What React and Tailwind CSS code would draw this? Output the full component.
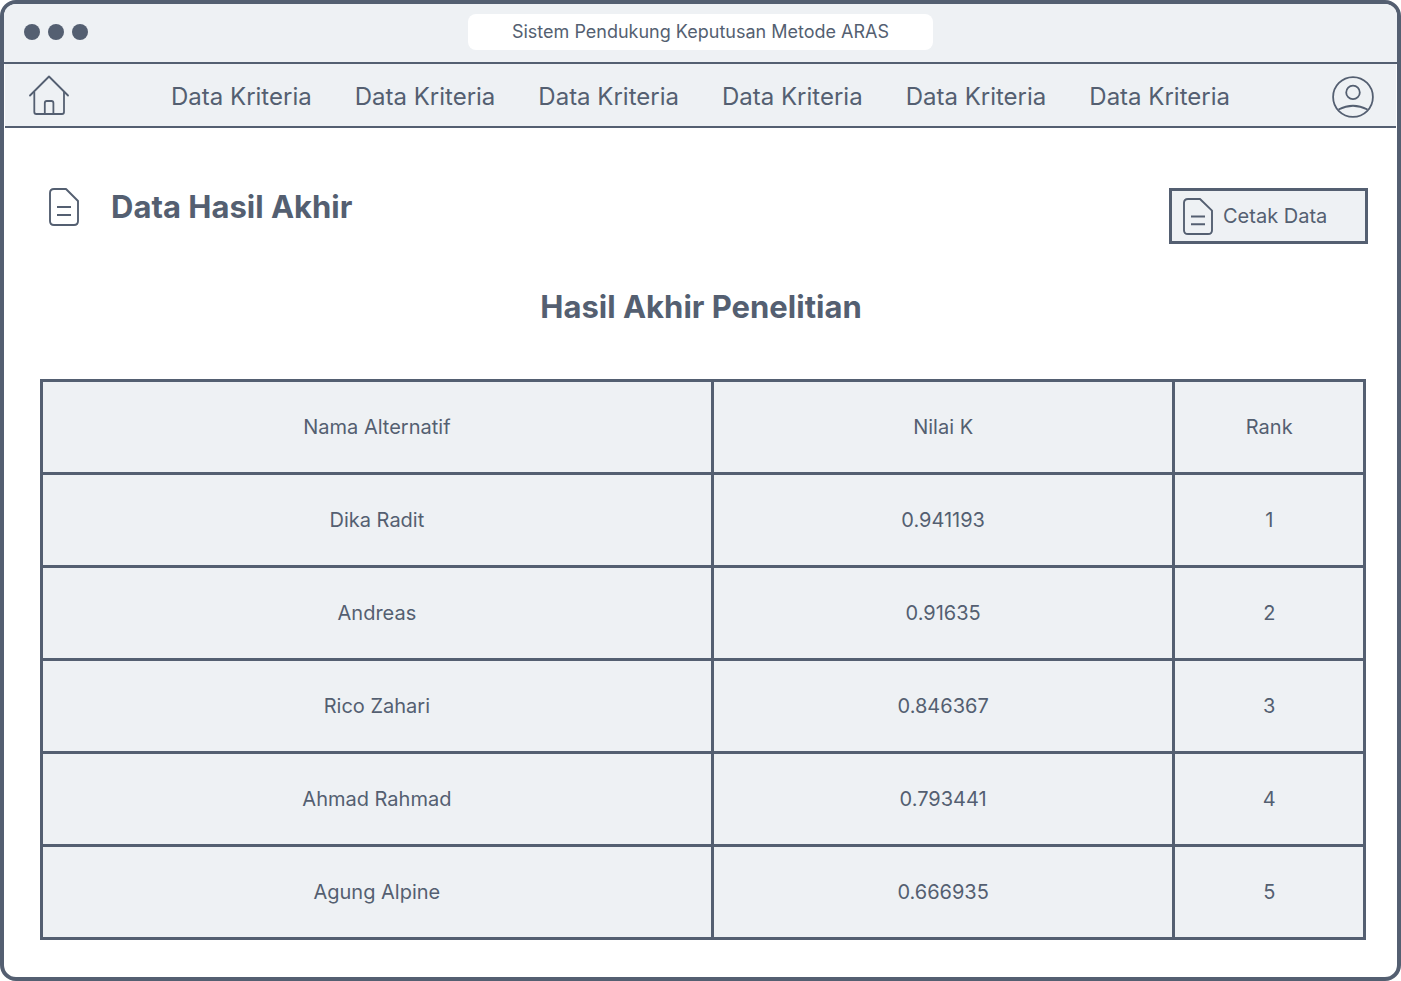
const navItems = [1, 2, 3, 4, 5, 6];

const results = [
  { name: "Dika Radit", value: "0.941193", rank: 1 },
  { name: "Andreas", value: "0.91635", rank: 2 },
  { name: "Rico Zahari", value: "0.846367", rank: 3 },
  { name: "Ahmad Rahmad", value: "0.793441", rank: 4 },
  { name: "Agung Alpine", value: "0.666935", rank: 5 },
];

function HomeIcon() {
  return (
    <svg width="40" height="44" viewBox="0 0 40 44" fill="none" stroke="currentColor" strokeWidth="1.8" aria-hidden="true">
      <path d="M1 20.5 L20 1.5 L39 20.5" strokeLinecap="round" strokeLinejoin="round" />
      <path d="M5.3 17 V37 Q5.3 39 7.3 39 H33 Q35 39 35 37 V17" />
      <path d="M15.8 39 V28 Q15.8 26 17.8 26 H22.4 Q24.4 26 24.4 28 V39" />
    </svg>
  );
}

function ProfileIcon() {
  return (
    <svg width="42" height="42" viewBox="0 0 42 42" fill="none" stroke="currentColor" strokeWidth="1.8" aria-hidden="true">
      <circle cx="21" cy="21" r="19.9" />
      <circle cx="21" cy="16.4" r="6.8" />
      <path d="M6.500 33.500 Q21 26 35.500 33.500" />
    </svg>
  );
}

function DocumentIcon({ width = 30, height = 38 }) {
  return (
    <svg className="shrink-0" width={width} height={height} viewBox="0 0 30 38" preserveAspectRatio="none" fill="none" stroke="currentColor" strokeWidth="1.9" aria-hidden="true">
      <path d="M5 1 H17 L29 13 V33 Q29 37 25 37 H5 Q1 37 1 33 V5 Q1 1 5 1 Z" strokeLinejoin="round" />
      <path d="M8 19 H22 M8 27 H22" />
    </svg>
  );
}

export default function App() {
  return (
    <div className="flex min-h-screen flex-col overflow-hidden rounded-2xl border-4 border-[#545f71] bg-white font-['Inter',sans-serif] text-[#545f71]">
      <header className="grid h-[60px] grid-cols-[1fr_auto_1fr] items-center border-b-2 border-[#545f71] bg-[#eef1f4] px-5 pb-0.5">
        <div className="flex gap-2">
          <span className="size-4 rounded-full bg-[#545f71]" />
          <span className="size-4 rounded-full bg-[#545f71]" />
          <span className="size-4 rounded-full bg-[#545f71]" />
        </div>
        <p className="rounded-lg bg-white px-11 py-1 text-center text-lg leading-7 font-normal">
          Sistem Pendukung Keputusan Metode ARAS
        </p>
      </header>

      <nav className="mx-px flex h-16 items-center justify-between border-b-2 border-[#545f71] bg-[#eef1f4] pt-1 pr-[22px] pl-6">
        <a href="#home" aria-label="Home">
          <HomeIcon />
        </a>
        <ul className="flex gap-[43px] text-2xl">
          {navItems.map((id) => (
            <li key={id}>
              <a href="#kriteria">Data Kriteria</a>
            </li>
          ))}
        </ul>
        <a href="#profile" aria-label="Profile">
          <ProfileIcon />
        </a>
      </nav>

      <main className="pt-[60px] pr-[31px] pb-9 pl-9">
        <div className="-mr-0.5 flex items-start justify-between">
          <div className="flex items-center gap-8 pl-[9px]">
            <DocumentIcon />
            <h1 className="text-[31px] leading-9 font-bold">Data Hasil Akhir</h1>
          </div>
          <button
            type="button"
            className="flex h-14 w-[199px] items-center gap-2.5 border-3 border-[#545f71] bg-[#eef1f4] px-[11px] text-xl"
          >
            <DocumentIcon width={30} height={37} />
            Cetak Data
          </button>
        </div>

        <h2 className="mt-[43px] pr-1 text-center text-[31px] leading-10 font-bold">Hasil Akhir Penelitian</h2>

        <table className="mt-[52px] w-full table-fixed border-collapse bg-[#eef1f4] text-center text-xl">
          <colgroup>
            <col className="w-[50.7%]" />
            <col className="w-[34.9%]" />
            <col className="w-[14.4%]" />
          </colgroup>
          <thead>
            <tr className="h-[93px]">
              <th scope="col" className="border-3 border-[#545f71] font-normal">Nama Alternatif</th>
              <th scope="col" className="border-3 border-[#545f71] font-normal">Nilai K</th>
              <th scope="col" className="border-3 border-[#545f71] font-normal">Rank</th>
            </tr>
          </thead>
          <tbody>
            {results.map((row) => (
              <tr key={row.rank} className="h-[93px]">
                <td className="border-3 border-[#545f71]">{row.name}</td>
                <td className="border-3 border-[#545f71]">{row.value}</td>
                <td className="border-3 border-[#545f71]">{row.rank}</td>
              </tr>
            ))}
          </tbody>
        </table>
      </main>
    </div>
  );
}
